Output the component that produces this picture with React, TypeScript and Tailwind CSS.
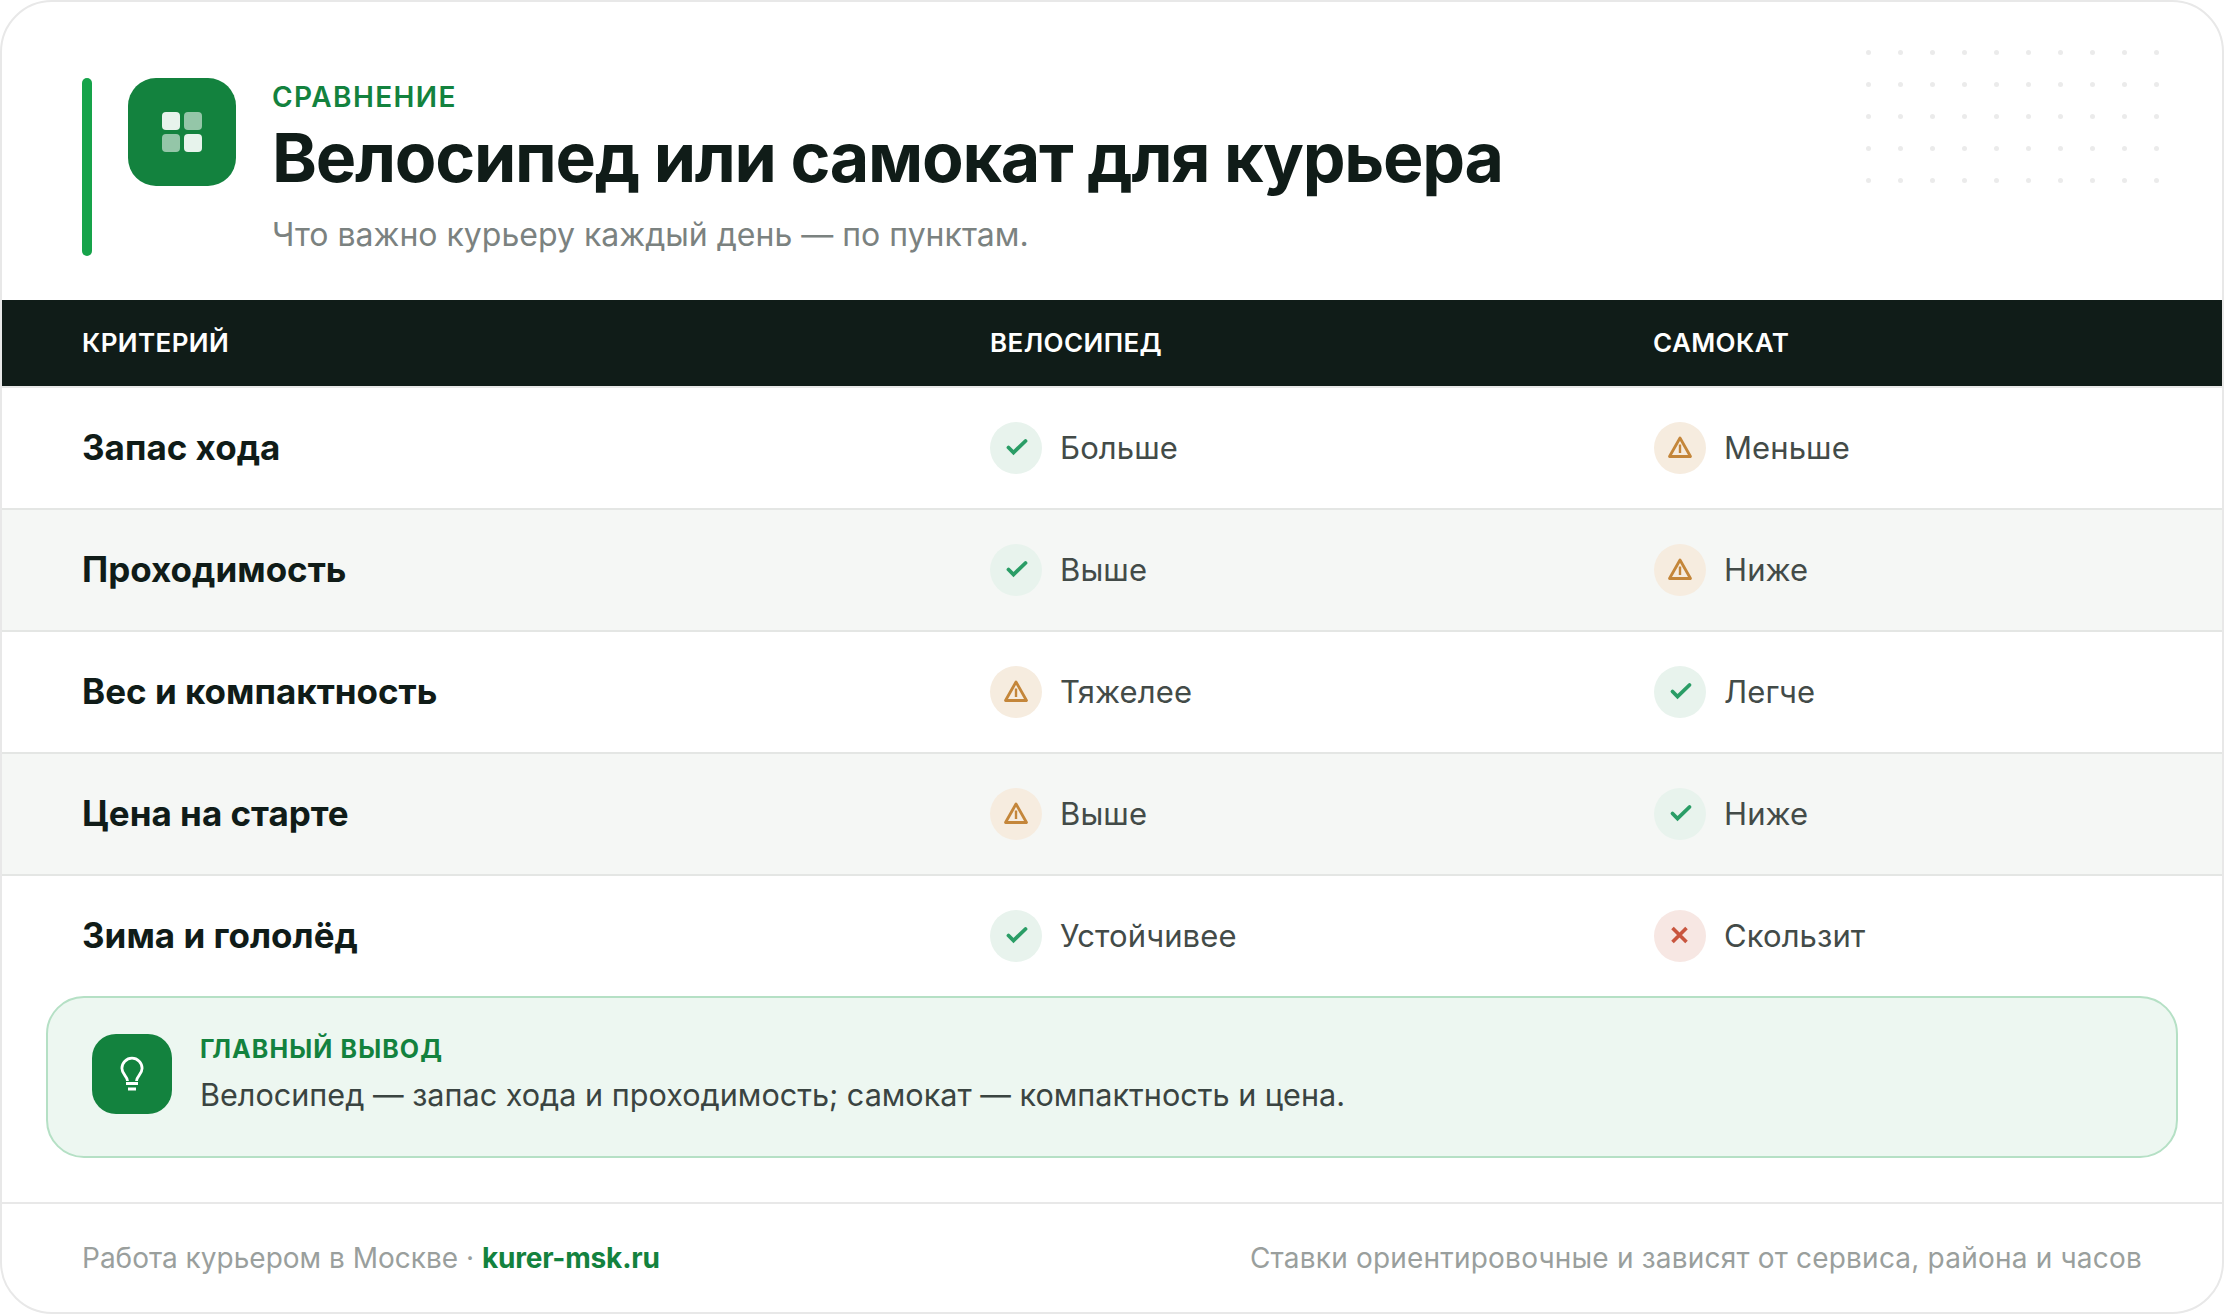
const font = { fontFamily: 'Inter, "Noto Sans", sans-serif' }

type Mark = 'ok' | 'warn' | 'no'

const rows: { name: string; bike: [Mark, string]; scooter: [Mark, string] }[] = [
  { name: 'Запас хода', bike: ['ok', 'Больше'], scooter: ['warn', 'Меньше'] },
  { name: 'Проходимость', bike: ['ok', 'Выше'], scooter: ['warn', 'Ниже'] },
  { name: 'Вес и компактность', bike: ['warn', 'Тяжелее'], scooter: ['ok', 'Легче'] },
  { name: 'Цена на старте', bike: ['warn', 'Выше'], scooter: ['ok', 'Ниже'] },
  { name: 'Зима и гололёд', bike: ['ok', 'Устойчивее'], scooter: ['no', 'Скользит'] },
]

const MarkIcon = ({ mark }: { mark: Mark }) => {
  if (mark === 'ok') {
    return (
      <span className="flex items-center justify-center w-[52px] h-[52px] rounded-full bg-[#e8f3ed]">
        <svg width="28" height="28" viewBox="0 0 28 28" fill="none" stroke="#2a9d66" strokeWidth="3.8" strokeLinecap="round">
          <path d="M6.5 13.5l5 5L23.5 7" />
        </svg>
      </span>
    )
  }
  if (mark === 'warn') {
    return (
      <span className="flex items-center justify-center w-[52px] h-[52px] rounded-full bg-[#f6ecdf]">
        <svg width="28" height="28" viewBox="0 0 28 28" fill="none" stroke="#c4863a" strokeWidth="2.8" strokeLinejoin="round">
          <path d="M14 4L24.5 22.5H3.5L14 4Z" />
          <path d="M14 10.5v8.5" strokeWidth="2.4" />
        </svg>
      </span>
    )
  }
  return (
    <span className="flex items-center justify-center w-[52px] h-[52px] rounded-full bg-[#f7e7e3]">
      <svg width="28" height="28" viewBox="0 0 28 28" fill="none" stroke="#c9563f" strokeWidth="3.6">
        <path d="M6.5 6l14 14M20.5 6l-14 14" />
      </svg>
    </span>
  )
}

const Cell = ({ mark, text }: { mark: Mark; text: string }) => (
  <div className="flex items-center gap-[18px]">
    <MarkIcon mark={mark} />
    <span className="pb-[2px] text-[31px] leading-none tracking-[0.1px] text-[#434b48]">{text}</span>
  </div>
)

const App = () => {
  return (
    <div style={font} className="w-[2224px] h-[1314px] bg-white">
      <div className="relative flex flex-col w-full h-full rounded-[52px] border-2 border-[#e8e8e8] overflow-hidden bg-white">
        <svg className="absolute left-[1864px] top-[48px]" width="296" height="136" viewBox="0 0 296 136">
          {Array.from({ length: 50 }).map((_, i) => (
            <circle key={i} cx={2.5 + (i % 10) * 32} cy={2.5 + Math.floor(i / 10) * 32} r="2.5" fill="#ebebeb" />
          ))}
        </svg>

        <div className="flex h-[298px] pl-[80px] pt-[76px]">
          <div className="w-[10px] h-[178px] rounded-full bg-[#16a34a]"></div>
          <div className="flex items-center justify-center w-[108px] h-[108px] ml-[36px] rounded-[28px] bg-[#13823e]">
            <div className="grid grid-cols-2 gap-[4px]">
              <span className="w-[18px] h-[18px] rounded-[4px] bg-white opacity-90"></span>
              <span className="w-[18px] h-[18px] rounded-[4px] bg-white opacity-55"></span>
              <span className="w-[18px] h-[18px] rounded-[4px] bg-white opacity-55"></span>
              <span className="w-[18px] h-[18px] rounded-[4px] bg-white opacity-90"></span>
            </div>
          </div>
          <div className="ml-[36px]">
            <div className="mt-[3px] text-[28px] leading-[32px] font-semibold tracking-[1.4px] text-[#13823e]">СРАВНЕНИЕ</div>
            <h1 className="mt-[6px] text-[68px] leading-[76px] font-bold tracking-[-1.27px] text-[#101c18]">Велосипед или самокат для курьера</h1>
            <p className="mt-[20px] text-[32px] leading-[40px] text-[#7b8280]">Что важно курьеру каждый день — по пунктам.</p>
          </div>
        </div>

        <div className="grid grid-cols-[908px_663px_1fr] items-center h-[88px] pb-[2px] px-[80px] bg-[#101c18] border-b-2 border-[#e8e8e8] text-[26px] font-semibold tracking-[0.4px] text-white">
          <span>КРИТЕРИЙ</span>
          <span>ВЕЛОСИПЕД</span>
          <span>САМОКАТ</span>
        </div>

        {rows.map((row, i) => (
          <div
            key={row.name}
            className={`grid grid-cols-[908px_664px_1fr] items-center px-[80px] ${i % 2 === 1 ? 'bg-[#f5f7f5]' : ''} ${i < 4 ? 'h-[122px] border-b-2 border-[#e4e6e4]' : 'h-[120px]'}`}
          >
            <span className="pb-[2px] text-[35px] font-bold text-[#101c18]">{row.name}</span>
            <Cell mark={row.bike[0]} text={row.bike[1]} />
            <Cell mark={row.scooter[0]} text={row.scooter[1]} />
          </div>
        ))}

        <div className="flex items-center h-[162px] mx-[44px] px-[44px] pb-[6px] gap-[28px] rounded-[38px] border-2 border-[#b5e0c5] bg-[#edf7f1]">
          <div className="flex items-center justify-center w-[80px] h-[80px] rounded-[24px] bg-[#13823e]">
            <svg width="40" height="40" viewBox="0 0 40 40" fill="none" stroke="#fff" strokeWidth="2.8">
              <path d="M15.5 27C15.5 22.5 9.9 20.5 9.9 14.3a10.1 10.1 0 0 1 20.2 0C30.1 20.5 24.5 22.5 24.5 27" strokeLinejoin="round" />
              <path d="M14 29.5h12M16 35h8" />
            </svg>
          </div>
          <div>
            <div className="text-[25px] leading-[30px] font-bold tracking-[1.1px] text-[#13823e]">ГЛАВНЫЙ ВЫВОД</div>
            <div className="mt-[11px] text-[30.6px] leading-[40px] text-[#3a4441]">Велосипед — запас хода и проходимость; самокат — компактность и цена.</div>
          </div>
        </div>

        <div className="flex items-center justify-between flex-1 mt-[44px] px-[80px] border-t-2 border-[#e8e8e8] text-[28px] text-[#9a9f9d]">
          <span>
            Работа курьером в Москве · <span className="font-bold tracking-[-0.2px] text-[#13823e]">kurer-msk.ru</span>
          </span>
          <span className="tracking-[0.2px]">Ставки ориентировочные и зависят от сервиса, района и часов</span>
        </div>
      </div>
    </div>
  )
}

export default App
